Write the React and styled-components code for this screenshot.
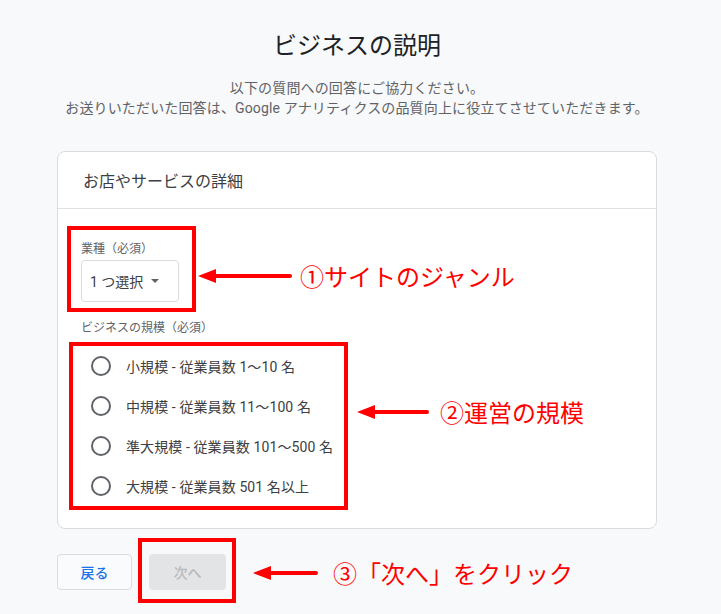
import React from "react";
import styled, { createGlobalStyle } from "styled-components";

const GlobalStyle = createGlobalStyle`
  html, body {
    margin: 0;
    background: #f8f9fa;
    font-family: Roboto, "Noto Sans CJK JP", sans-serif;
  }
  body {
    min-height: 614px;
  }
`;

const Page = styled.div`
  width: 600px;
  margin-left: 57px;
  padding-top: 30px;
`;

const Title = styled.h1`
  margin: 0;
  font-size: 24px;
  line-height: 32px;
  font-weight: 400;
  color: #202124;
  text-align: center;
`;

const Subtitle = styled.p`
  margin: 16px 0 0;
  font-size: 14px;
  line-height: 20px;
  color: #5f6368;
  text-align: center;
  white-space: nowrap;
  letter-spacing: 0.15px;
`;

const Card = styled.section`
  margin-top: 33px;
  background: #fff;
  border: 1px solid #dadce0;
  border-radius: 8px;
`;

const CardHeader = styled.div`
  height: 56px;
  display: flex;
  align-items: center;
  padding: 0 25px;
  border-bottom: 1px solid #e0e0e0;
  font-size: 16px;
  color: #3c4043;
`;

const CardBody = styled.div`
  padding: 17px 23px 18px;
`;

const Row = styled.div`
  display: flex;
  align-items: center;
  margin-top: ${(p) => p.$top || 0}px;
`;

const RedBox = styled.div`
  display: flex;
  flex-direction: column;
  align-items: flex-start;
  flex: none;
  border: 4px solid #ff0000;
  margin-left: ${(p) => p.$shift || 0}px;
  padding: ${(p) => p.$pad};
`;

const FieldLabel = styled.div`
  font-size: 12px;
  line-height: 16px;
  color: #5f6368;
  margin-top: ${(p) => p.$top || 0}px;
`;

const SelectButton = styled.button`
  margin-top: 3px;
  height: 42px;
  width: 98px;
  box-sizing: border-box;
  display: flex;
  align-items: center;
  padding: 0 0 0 8px;
  background: #fff;
  border: 1px solid #dadce0;
  border-radius: 4px;
  font-family: inherit;
  font-size: 14px;
  color: #3c4043;
`;

const Caret = styled.span`
  width: 0;
  height: 0;
  margin-left: 8px;
  border-left: 4px solid transparent;
  border-right: 4px solid transparent;
  border-top: 4px solid #5f6368;
`;

const RadioRow = styled.label`
  height: 40px;
  display: flex;
  align-items: center;
  font-size: 14px;
  letter-spacing: 0.1px;
  color: #3c4043;
  white-space: nowrap;
`;

const RadioTarget = styled.span`
  width: 40px;
  height: 40px;
  display: flex;
  align-items: center;
  justify-content: center;
  margin-right: 5px;
`;

const RadioCircle = styled.span`
  width: 20px;
  height: 20px;
  box-sizing: border-box;
  border: 2px solid #5f6368;
  border-radius: 50%;
`;

const Callout = styled.div`
  display: flex;
  align-items: center;
  margin-left: ${(p) => p.$gap}px;
  padding-top: ${(p) => p.$down || 0}px;
  padding-bottom: ${(p) => p.$up || 0}px;
`;

const CalloutText = styled.span`
  margin-left: ${(p) => p.$gap}px;
  font-family: "Noto Sans CJK JP", sans-serif;
  font-size: 24px;
  line-height: 30px;
  color: #ff0000;
  white-space: nowrap;
`;

const Footer = styled.div`
  display: flex;
  align-items: flex-start;
  margin-top: 9px;
`;

const BackButton = styled.button`
  margin-top: 16px;
  margin-right: 6px;
  width: 75px;
  height: 36px;
  background: #fafbfc;
  border: 1px solid #dadce0;
  border-radius: 4px;
  font-family: inherit;
  font-size: 14px;
  font-weight: 500;
  color: #1a73e8;
`;

const NextButton = styled.button`
  width: 77px;
  height: 36px;
  background: #e3e4e6;
  border: none;
  border-radius: 4px;
  font-family: inherit;
  font-size: 14px;
  font-weight: 500;
  color: #b9babd;
`;

function Arrow({ length }) {
  return (
    <svg width={length} height="16" viewBox={`0 0 ${length} 16`}>
      <polygon points="0,8 18,1 18,15" fill="#ff0000" />
      <line x1="16" y1="8" x2={length - 2} y2="8" stroke="#ff0000" strokeWidth="4" strokeLinecap="round" />
    </svg>
  );
}

const sizes = [
  "小規模 - 従業員数 1〜10 名",
  "中規模 - 従業員数 11〜100 名",
  "準大規模 - 従業員数 101〜500 名",
  "大規模 - 従業員数 501 名以上",
];

export default function App() {
  return (
    <>
      <GlobalStyle />
      <Page>
        <Title>ビジネスの説明</Title>
        <Subtitle>
          以下の質問への回答にご協力ください。
          <br />
          お送りいただいた回答は、Google アナリティクスの品質向上に役立てさせていただきます。
        </Subtitle>
        <Card>
          <CardHeader>お店やサービスの詳細</CardHeader>
          <CardBody>
            <Row>
              <RedBox $shift={-14} $pad="11px 13px 6px 10px">
                <FieldLabel>業種（必須）</FieldLabel>
                <SelectButton>
                  1 つ選択
                  <Caret />
                </SelectButton>
              </RedBox>
              <Callout $gap={2} $down={14}>
                <Arrow length={94} />
                <CalloutText $gap={8}>①サイトのジャンル</CalloutText>
              </Callout>
            </Row>
            <FieldLabel $top={8}>ビジネスの規模（必須）</FieldLabel>
            <Row $top={6}>
              <RedBox $shift={-12} $pad="0 11px 0 8px">
                {sizes.map((s) => (
                  <RadioRow key={s}>
                    <RadioTarget>
                      <RadioCircle />
                    </RadioTarget>
                    {s}
                  </RadioRow>
                ))}
              </RedBox>
              <Callout $gap={9} $up={28}>
                <Arrow length={72} />
                <CalloutText $gap={11}>②運営の規模</CalloutText>
              </Callout>
            </Row>
          </CardBody>
        </Card>
        <Footer>
          <BackButton>戻る</BackButton>
          <RedBox $pad="12px 6px 9px 7px">
            <NextButton>次へ</NextButton>
          </RedBox>
          <Callout $gap={17} style={{ alignSelf: "center" }} $down={5}>
            <Arrow length={65} />
            <CalloutText $gap={15}>③「次へ」をクリック</CalloutText>
          </Callout>
        </Footer>
      </Page>
    </>
  );
}
